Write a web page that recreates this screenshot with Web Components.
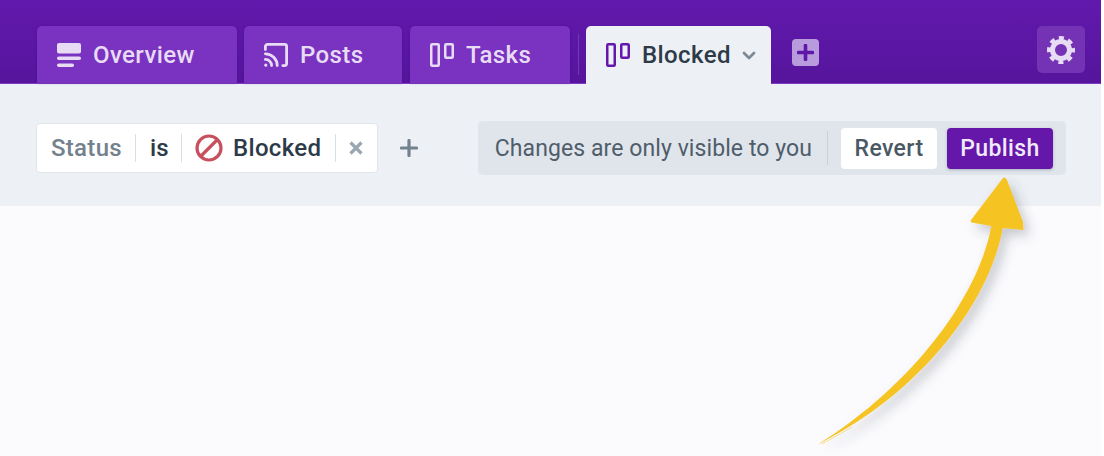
<!DOCTYPE html>
<html>
<head>
<meta charset="utf-8">
<style>
html,body{margin:0;padding:0;background:#fff;}
body{width:1104px;height:456px;overflow:hidden;font-family:"Roboto","Liberation Sans",sans-serif;}
</style>
</head>
<body>
<app-frame>
    <tab-bar slot="top">
        <nav-tab icon="overview" style="width:200px">Overview</nav-tab>
        <nav-tab icon="posts" style="width:158px">Posts</nav-tab>
        <nav-tab icon="board" style="width:160px;margin-left:1px">Tasks</nav-tab>
        <tab-divider></tab-divider>
        <nav-tab icon="board" active style="width:185px">Blocked</nav-tab>
    </tab-bar>
    <filter-bar slot="filters"></filter-bar>
    <publish-bar slot="filters"></publish-bar>
</app-frame>
<script>
const ICONS = {
    overview:`<svg width="24" height="24" viewBox="0 0 24 24"><rect x="0" y="0" width="24" height="10.5" rx="2" fill="currentColor"/><rect x="0" y="13.5" width="24" height="3.5" rx="1.75" fill="currentColor"/><rect x="0" y="20.5" width="17" height="3.5" rx="1.75" fill="currentColor"/></svg>`,
    posts:`<svg width="24" height="24" viewBox="0 0 24 24" fill="none" stroke="currentColor" stroke-width="2.8" stroke-linecap="round"><path d="M1.4 6.500V3.600A2.200 2.200 0 0 1 3.600 1.400h17a2 2 0 0 1 2 2v17.200a2 2 0 0 1-2 2h-1.800"/><path d="M1.400 10.800a11.800 11.800 0 0 1 11.800 11.800"/><path d="M1.400 16.400a6.200 6.200 0 0 1 6.200 6.200"/><circle cx="1.800" cy="22.200" r="1" fill="currentColor" stroke-width="1.200"/></svg>`,
    board:`<svg width="24" height="24" viewBox="0 0 24 24" fill="none" stroke="currentColor" stroke-width="2.5"><rect x="1.250" y="1.250" width="7.500" height="21.500" rx="1"/><rect x="15.250" y="1.250" width="7.500" height="13.500" rx="1"/></svg>`
};

// brush arrow: centre line is one cubic, the width tapers towards the tail
function arrowPath(){
    const p = [[197,57],[185,125],[122,215],[20,273]];
    const right = [], left = [];
    for(let i = 0; i <= 40; i++){
        const t = i/40, u = 1-t;
        const x = u*u*u*p[0][0] + 3*u*u*t*p[1][0] + 3*u*t*t*p[2][0] + t*t*t*p[3][0];
        const y = u*u*u*p[0][1] + 3*u*u*t*p[1][1] + 3*u*t*t*p[2][1] + t*t*t*p[3][1];
        const dx = 3*u*u*(p[1][0]-p[0][0]) + 6*u*t*(p[2][0]-p[1][0]) + 3*t*t*(p[3][0]-p[2][0]);
        const dy = 3*u*u*(p[1][1]-p[0][1]) + 6*u*t*(p[2][1]-p[1][1]) + 3*t*t*(p[3][1]-p[2][1]);
        const len = Math.hypot(dx,dy);
        const w = 5.8*(1-t*t*t);
        right.push(`${(x+dy/len*w).toFixed(1)} ${(y-dx/len*w).toFixed(1)}`);
        left.unshift(`${(x-dy/len*w).toFixed(1)} ${(y+dx/len*w).toFixed(1)}`);
    }
    return `M203 8Q205 6.5 207 10L223 52 223.5 60 ${right.join(" ")} ${left.join(" ")} 171.5 52.5Q170 51 171 50z`;
}

class AppFrame extends HTMLElement {
    constructor(){
        super();
        this.attachShadow({mode:'open'}).innerHTML = `<style>
            :host { display:block; width:1101px; height:456px; background:#fbfbfd; position:relative; }
            .top { height:83px; background:linear-gradient(#6119ad,#56159c); border-bottom:1px solid #7d3cc0; display:flex; align-items:flex-end; padding-left:37px; padding-right:16px; }
            .plus { width:27px; height:27px; border-radius:4px; background:#b89bdc; color:#5f17a9; display:flex; align-items:center; justify-content:center; margin:0 0 17px 21px; }
            .gear { width:48px; height:47px; border-radius:5px; background:#7432b5; color:#e8dcf5; display:flex; align-items:center; justify-content:center; margin:0 0 10px auto; }
            .filters { height:122px; background:#edf0f5; display:flex; align-items:center; padding:6px 35px 0 36px; box-sizing:border-box; }
            .arrow { position:absolute; left:800px; top:170px; overflow:visible; }
        </style>
        <div class="top"><slot name="top"></slot>
            <div class="plus"><svg width="17" height="17" viewBox="0 0 17 17"><path d="M8.500 1.500v14M1.500 8.500h14" stroke="currentColor" stroke-width="3.600" stroke-linecap="round"/></svg></div>
            <div class="gear"><svg width="28" height="28" viewBox="0 0 28 28" fill="none" stroke="currentColor"><circle cx="14" cy="14" r="8.500" stroke-width="5"/><circle cx="14" cy="14" r="12" stroke-width="4" stroke-dasharray="5 4.425" stroke-dashoffset="2.500"/></svg></div>
        </div>
        <div class="filters"><slot name="filters"></slot></div>
        <svg class="arrow" width="250" height="286" viewBox="0 0 250 286">
            <defs><filter id="s" x="-30%" y="-30%" width="160%" height="160%"><feDropShadow dx="5" dy="6" stdDeviation="6" flood-color="#3a3f55" flood-opacity=".28"/></filter></defs>
            <path filter="url(#s)" fill="#f5c324" d="${arrowPath()}"/>
            <path d="M19 274L46 257M22 274L52 257" fill="none" stroke="#f5c324" stroke-width="1" opacity=".5"/>
        </svg>`;
    }
}

class TabBar extends HTMLElement {
    constructor(){
        super();
        this.attachShadow({mode:'open'}).innerHTML = `<style>
            :host { display:flex; align-items:flex-end; gap:7px; height:100%; }
        </style><slot></slot>`;
    }
}

class TabDivider extends HTMLElement {
    constructor(){
        super();
        this.attachShadow({mode:'open'}).innerHTML = `<style>
            :host { display:block; width:1px; height:41px; margin:0 0 8px 1px; background:#7338b3; }
        </style>`;
    }
}

class NavTab extends HTMLElement {
    constructor(){
        super();
        const active = this.hasAttribute("active");
        this.attachShadow({mode:'open'}).innerHTML = `<style>
            :host { display:flex; align-items:center; height:57px; box-sizing:border-box; padding:0 0 0 20px; gap:12px; background:#7a33c0; color:#e8dcf5; border-radius:5px 5px 0 0; font:500 24px/1 "Roboto",sans-serif; letter-spacing:.4px; white-space:nowrap; box-shadow:0 0 3px rgba(60,0,120,.35); }
            :host([active]) { background:#edf0f5; color:#2d3a48; height:58px; margin-bottom:-1px; box-shadow:none; }
            :host([active]) .icon { color:#6417ad; }
            .icon { display:flex; }
            .caret { margin-left:-1px; color:#7d8a96; display:flex; }
        </style><span class="icon">${ICONS[this.getAttribute("icon")]}</span><slot></slot>${active ? `<span class="caret"><svg width="14" height="9" viewBox="0 0 14 9"><path d="M2 2l5 5 5-5" fill="none" stroke="currentColor" stroke-width="2.800" stroke-linecap="round" stroke-linejoin="round"/></svg></span>` : ""}`;
    }
}

class FilterBar extends HTMLElement {
    constructor(){
        super();
        this.attachShadow({mode:'open'}).innerHTML = `<style>
            :host { display:flex; align-items:center; font:500 24px/1 "Roboto",sans-serif; letter-spacing:.3px; }
            .box { display:flex; align-items:center; height:50px; box-sizing:border-box; background:#fff; border:1px solid #e2e6ec; border-radius:4px; }
            .part { display:flex; align-items:center; height:28px; padding:0 14px 0 14px; border-right:1px solid #d8dee6; }
            .part:last-child { border:0; padding:0 13px 0 12px; }
            .status { color:#74818e; padding-right:13px; }
            .is,.val { color:#2d3a48; }
            .is { padding-right:12px; }
            .val { gap:10px; padding-left:13px; }
            .add { margin-left:22px; color:#74818e; display:flex; }
        </style>
        <div class="box">
            <span class="part status">Status</span>
            <span class="part is">is</span>
            <span class="part val"><svg width="28" height="28" viewBox="0 0 28 28" fill="none" stroke="#c8505e" stroke-width="3.200"><circle cx="14" cy="14" r="12"/><path d="M5.500 22.500l17-17"/></svg>Blocked</span>
            <span class="part"><svg width="16" height="16" viewBox="0 0 16 16"><path d="M2.500 2.500l11 11M13.500 2.500l-11 11" stroke="#9aa6b2" stroke-width="3.200"/></svg></span>
        </div>
        <span class="add"><svg width="18" height="18" viewBox="0 0 18 18"><path d="M9 1.500v15M1.500 9h15" stroke="currentColor" stroke-width="3.200" stroke-linecap="round"/></svg></span>`;
    }
}

class PublishBar extends HTMLElement {
    constructor(){
        super();
        this.attachShadow({mode:'open'}).innerHTML = `<style>
            :host { display:flex; align-items:center; margin-left:auto; height:54px; box-sizing:border-box; background:#e0e5ec; border-radius:5px; padding:0 13px 0 17px; font:400 23px/1 "Roboto",sans-serif; color:#4f5d6b; }
            .msg { letter-spacing:.08px; }
            .sep { width:1px; height:34px; background:#c9d0d9; margin:0 13px 0 15px; }
            button { font:500 23px/1 "Roboto",sans-serif; letter-spacing:.4px; height:41px; border-radius:4px; border:0; padding:0; display:flex; align-items:center; justify-content:center; }
            .revert { width:96px; background:#fff; color:#4a5866; }
            .publish { width:106px; margin-left:10px; background:#6417a8; color:#f1e9fa; box-shadow:0 1px 3px rgba(40,50,80,.3); }
        </style>
        <span class="msg">Changes are only visible to you</span><span class="sep"></span>
        <button class="revert">Revert</button><button class="publish">Publish</button>`;
    }
}

customElements.define("app-frame",AppFrame);
customElements.define("tab-bar",TabBar);
customElements.define("tab-divider",TabDivider);
customElements.define("nav-tab",NavTab);
customElements.define("filter-bar",FilterBar);
customElements.define("publish-bar",PublishBar);
</script>
</body>
</html>
